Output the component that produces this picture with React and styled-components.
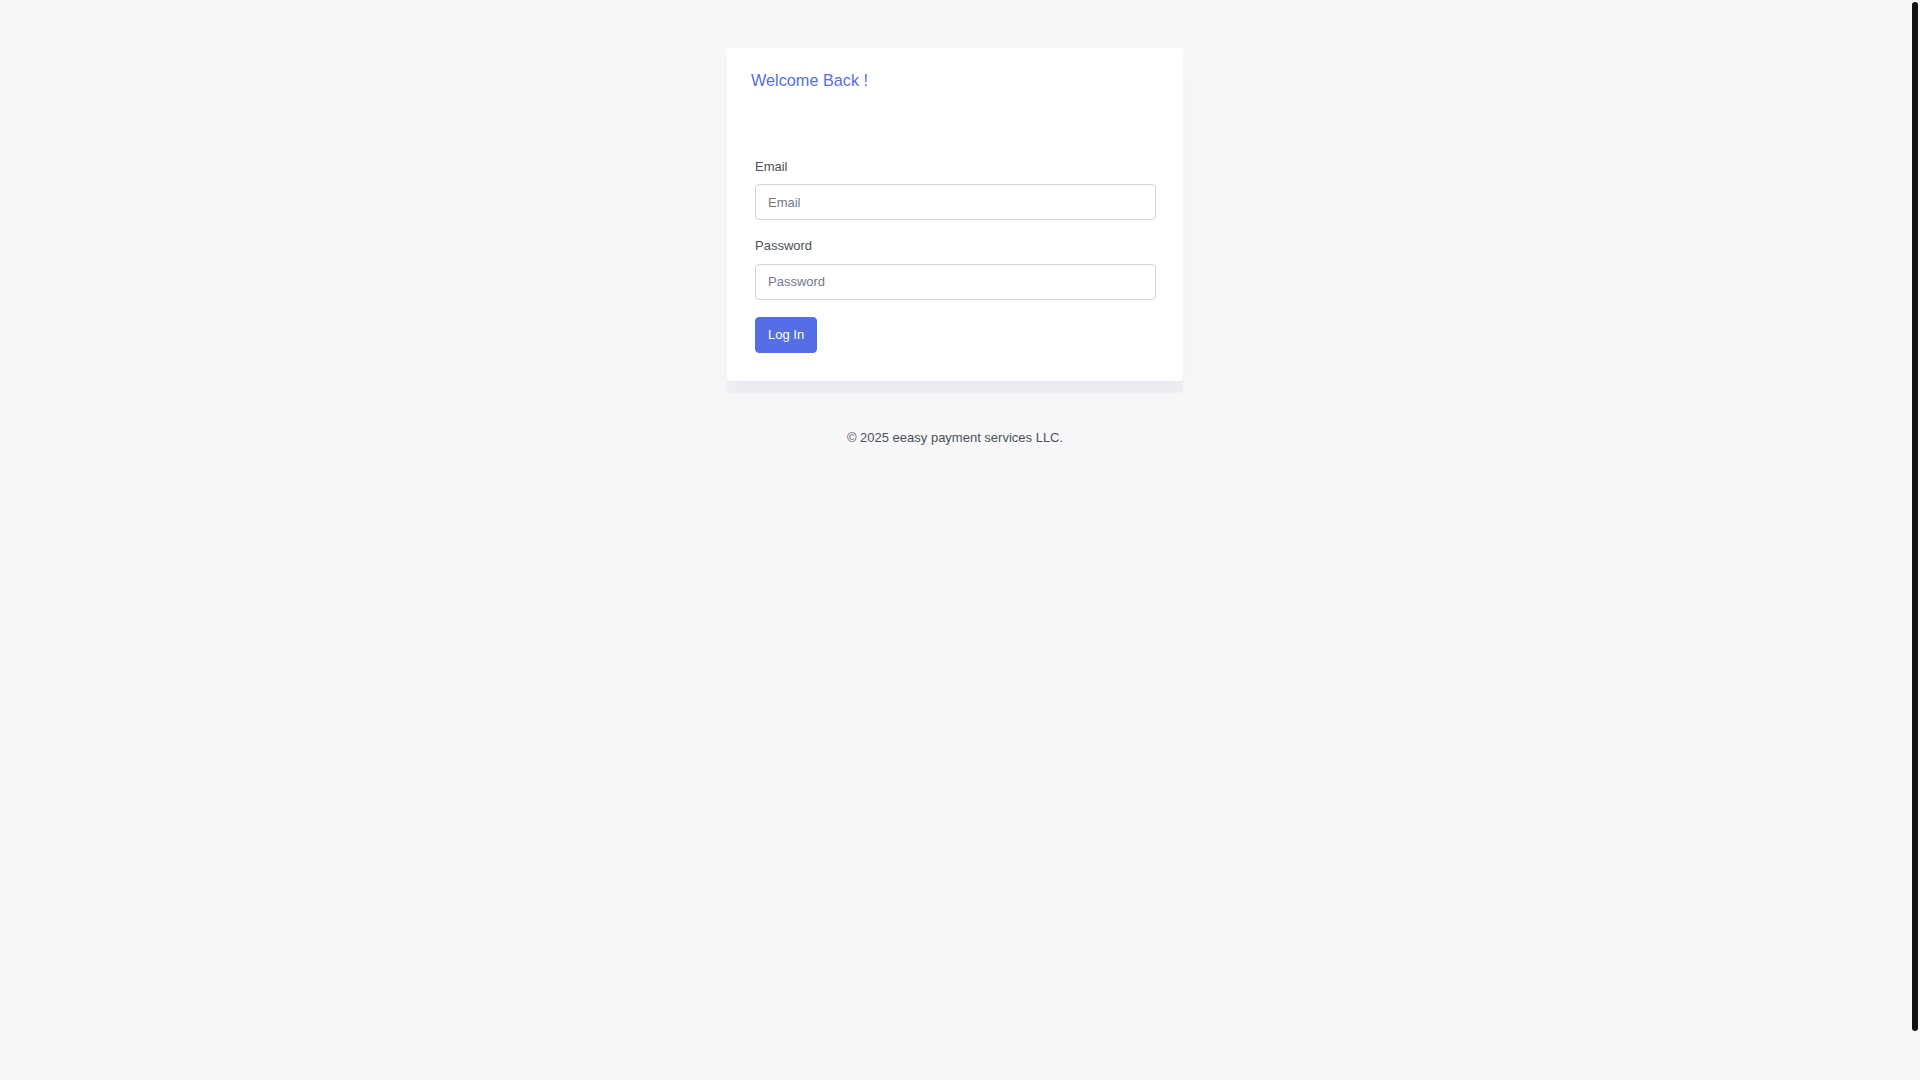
import React from "react";
import styled, { createGlobalStyle } from "styled-components";

const Global = createGlobalStyle`
  html, body { margin: 0; padding: 0; background: #f8f8fb; }
  body {
    font-family: "Liberation Sans", Arial, sans-serif;
    color: #495057;
    font-size: 13px;
    overflow: hidden;
  }
  * { box-sizing: border-box; }
`;

const Page = styled.div`
  min-height: 1080px;
  display: flex;
  flex-direction: column;
  align-items: center;
  padding: 48px 10px 0 0;
`;

const ScrollThumb = styled.div`
  position: fixed;
  top: 2px;
  right: 2px;
  width: 6px;
  height: 1029px;
  background: #111111;
  border-radius: 3px;
`;

const CardShell = styled.div`
  width: 456px;
  background: #eff1f5;
  border-radius: 4px;
  padding-bottom: 12px;
`;

const Card = styled.div`
  background: #ffffff;
  border-radius: 4px;
  box-shadow: 0 12px 24px rgba(18, 38, 63, 0.03);
  padding: 23px 23px 28px 24px;
`;

const Title = styled.h5`
  margin: 0;
  font-size: 16.25px;
  font-weight: 400;
  line-height: 1.2;
  color: #556ee6;
`;

const Form = styled.form`
  margin-top: 66px;
  padding: 0 4px;
  display: flex;
  flex-direction: column;
  align-items: flex-start;
`;

const Field = styled.div`
  width: 100%;
  margin-bottom: ${(p) => (p.$last ? "17px" : "16px")};
`;

const Label = styled.label`
  display: block;
  font-size: 13px;
  line-height: 19.5px;
  color: #495057;
  margin-bottom: 8px;
`;

const Input = styled.input`
  display: block;
  width: 100%;
  height: 36px;
  padding: 0 12px;
  font-family: "Liberation Sans", Arial, sans-serif;
  font-size: 13px;
  color: #495057;
  background: #ffffff;
  border: 1px solid #ced4da;
  border-radius: 4px;
  outline: none;
  &::placeholder { color: #74788d; }
`;

const Button = styled.button`
  height: 36px;
  padding: 0 12px;
  font-family: "Liberation Sans", Arial, sans-serif;
  font-size: 13px;
  color: #ffffff;
  background: #556ee6;
  border: 1px solid #556ee6;
  border-radius: 4px;
  cursor: pointer;
`;

const Footer = styled.p`
  margin: 35px 0 0;
  font-size: 13px;
  line-height: 19.5px;
  color: #495057;
  text-align: center;
`;

export default function App() {
  return (
    <>
      <Global />
      <Page>
        <CardShell>
          <Card>
            <Title>Welcome Back !</Title>
            <Form onSubmit={(e) => e.preventDefault()}>
              <Field>
                <Label htmlFor="email">Email</Label>
                <Input id="email" type="text" placeholder="Email" />
              </Field>
              <Field $last>
                <Label htmlFor="password">Password</Label>
                <Input id="password" type="password" placeholder="Password" />
              </Field>
              <Button type="submit">Log In</Button>
            </Form>
          </Card>
        </CardShell>
        <Footer>© 2025 eeasy payment services LLC.</Footer>
      </Page>
      <ScrollThumb />
    </>
  );
}
